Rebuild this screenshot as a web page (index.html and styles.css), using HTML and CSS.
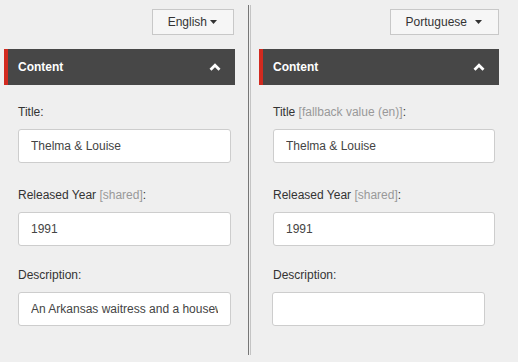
FILE: index.html
```html
<!DOCTYPE html>
<html lang="en">
<head>
    <meta charset="UTF-8">
    <title>Translate Content</title>
    <link rel="stylesheet" href="styles.css">
</head>
<body>
    <div class="editor">
        <div class="column column-left">
            <div class="toolbar">
                <button class="lang-btn">English<svg class="caret" width="7" height="4" viewBox="0 0 7 4"><polygon points="0,0 7,0 3.5,4"/></svg></button>
            </div>
            <div class="panel-head">
                <span>Content</span>
                <svg width="12" height="8" viewBox="0 0 12 8"><path d="M1.5 6.8 L6 2.3 L10.5 6.8" fill="none" stroke="#fff" stroke-width="2.8"/></svg>
            </div>
            <div class="fields">
                <div class="field field-title">
                    <label>Title:</label>
                    <input class="text-input" type="text" value="Thelma &amp; Louise">
                </div>
                <div class="field">
                    <label>Released Year <span class="hint">[shared]</span>:</label>
                    <input class="text-input" type="text" value="1991">
                </div>
                <div class="field">
                    <label>Description:</label>
                    <input class="text-input desc-input" type="text" value="An Arkansas waitress and a housewife shoot a rapist and take off in a '66 Thunderbird.">
                </div>
            </div>
        </div>

        <div class="divider"></div>

        <div class="column column-right">
            <div class="toolbar">
                <button class="lang-btn">Portuguese<svg class="caret caret-wide" width="7" height="4" viewBox="0 0 7 4"><polygon points="0,0 7,0 3.5,4"/></svg></button>
            </div>
            <div class="panel-head">
                <span>Content</span>
                <svg width="12" height="8" viewBox="0 0 12 8"><path d="M1.5 6.8 L6 2.3 L10.5 6.8" fill="none" stroke="#fff" stroke-width="2.8"/></svg>
            </div>
            <div class="fields">
                <div class="field field-title">
                    <label>Title <span class="hint">[fallback value (en)]</span>:</label>
                    <input class="text-input" type="text" value="Thelma &amp; Louise">
                </div>
                <div class="field">
                    <label>Released Year <span class="hint">[shared]</span>:</label>
                    <input class="text-input" type="text" value="1991">
                </div>
                <div class="field">
                    <label>Description:</label>
                    <input class="text-input desc-input desc-empty" type="text" value="">
                </div>
            </div>
        </div>
    </div>
</body>
</html>
```

FILE: styles.css
```css
/* Side by side translation editor */
body {
    margin: 0;
    background: #efefef;
    font-family: "Liberation Sans", Arial, sans-serif;
    font-size: 12px;
    color: #333;
}

.editor {
    display: flex;
    height: 350px;
    padding: 5px 0 0 4px;
}

.column {
    padding-top: 4px;
}

.column-left {
    width: 231px;
}

.column-right {
    width: 240px;
}

/* Divider between languages */
.divider {
    width: 1px;
    margin: 0 8px 0 13px;
    border-left: 1px solid #767676;
    border-right: 1px solid #c4c4c4;
}

/* Language dropdown */
.toolbar {
    display: flex;
    justify-content: flex-end;
    margin-bottom: 14px;
}

.column-left .toolbar {
    padding-right: 1px;
}

.lang-btn {
    height: 26px;
    display: flex;
    align-items: center;
    padding: 0 16px 0 15px;
    border: 1px solid #c8c8c8;
    background: #f6f6f6;
    font-family: inherit;
    font-size: 12px;
    color: #333;
}

.caret {
    margin-left: 3px;
    fill: #333;
}

.caret-wide {
    margin-left: 8px;
}

/* Panel header */
.panel-head {
    height: 36px;
    display: flex;
    align-items: center;
    justify-content: space-between;
    padding: 0 14px 0 10px;
    background: #474747;
    border-left: 4px solid #d22a1f;
    color: #fff;
    font-weight: bold;
}

/* Fields */
.fields {
    padding: 19px 0 0 14px;
}

.field {
    margin-bottom: 21px;
}

.field-title {
    margin-bottom: 24px;
}

.field label {
    display: block;
    line-height: 16px;
    margin-bottom: 9px;
}

.hint {
    color: #999;
}

.text-input {
    box-sizing: border-box;
    display: block;
    width: calc(100% - 4px);
    height: 34px;
    padding: 0 12px;
    border: 1px solid #cdcdcd;
    border-radius: 3px;
    background: #fff;
    font-family: inherit;
    font-size: 12px;
    color: #444;
}

.desc-input {
    width: 213px;
}

.desc-empty {
    margin-left: -1px;
}
```
